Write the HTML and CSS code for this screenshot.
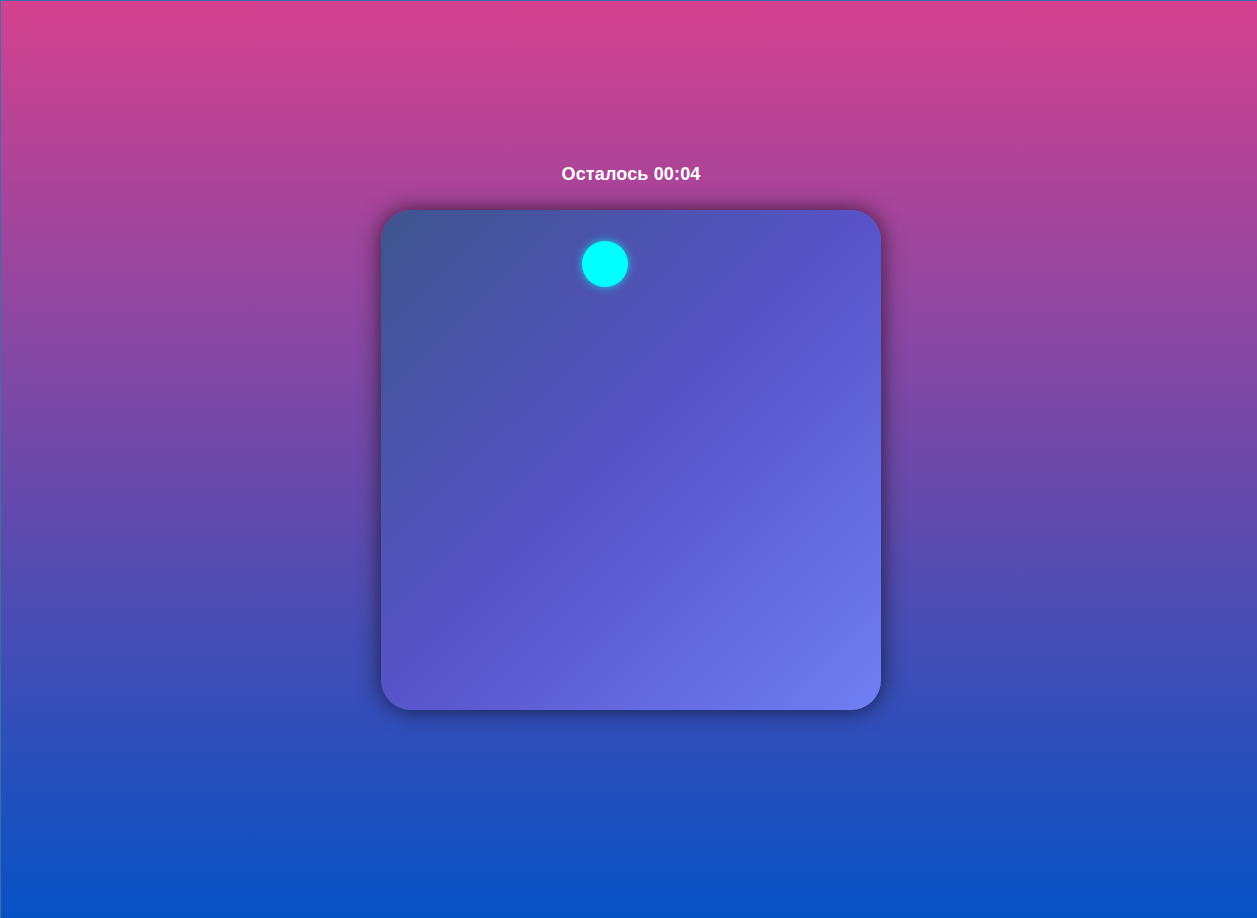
FILE: index.html
```html
<!DOCTYPE html>
<html lang="ru">
<head>
<meta charset="utf-8">
<title>Игра</title>
<link rel="stylesheet" href="styles.css">
</head>
<body>
<main class="page">
  <div class="timer">Осталось 00:04</div>
  <div class="field">
    <div class="ball"></div>
  </div>
</main>
</body>
</html>
```
FILE: styles.css
```css
html, body {
  margin: 0;
  padding: 0;
}
body {
  height: 918px;
  box-sizing: border-box;
  border-top: 1px solid #3a6fa8;
  border-left: 1px solid #3a6fa8;
  background: linear-gradient(to bottom, #d4418e 0%, #0652c5 100%);
  font-family: "Liberation Sans", Arial, sans-serif;
  overflow: hidden;
}
.page {
  display: flex;
  flex-direction: column;
  align-items: center;
  padding-top: 163px;
  padding-left: 4px;
}
.timer {
  color: #ffffff;
  font-weight: bold;
  font-size: 18px;
  letter-spacing: 0.15px;
  line-height: 21px;
  height: 21px;
}
.field {
  position: relative;
  margin-top: 25px;
  width: 500px;
  height: 500px;
  border-radius: 30px;
  background: linear-gradient(135deg, #3e548d 0%, #5853c9 50%, #6f7ff3 100%);
  box-shadow: 0 0 22px rgba(0, 0, 0, 0.65);
}
.ball {
  position: absolute;
  left: 201px;
  top: 31px;
  width: 46px;
  height: 46px;
  border-radius: 50%;
  background: #00ffff;
  box-shadow: 0 0 8px rgba(0, 255, 255, 0.7);
}
```
